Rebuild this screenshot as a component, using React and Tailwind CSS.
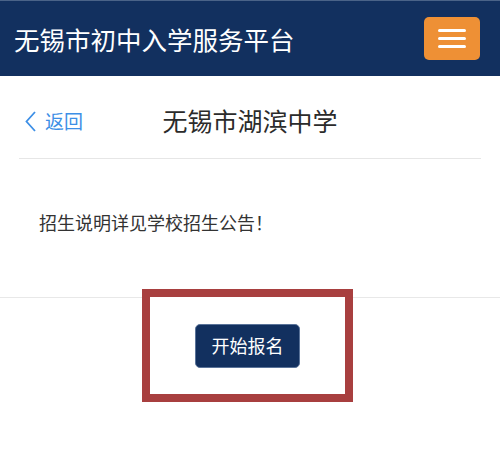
const FONT = { fontFamily: '"Noto Sans CJK SC", "Noto Sans", sans-serif' };

const App = () => {
  return (
    <div className="w-[500px] h-[463px] bg-white overflow-hidden" style={FONT}>
      {/* top bar */}
      <div className="h-[76px] bg-[#12305f] border-t border-[#4a6388] flex items-center justify-between pl-[14px] pr-[20px]">
        <h1 className="text-[25.5px] text-white leading-none">无锡市初中入学服务平台</h1>
        <button className="w-[56px] h-[43px] bg-[#ee9035] rounded-[5px] flex flex-col items-center justify-center gap-[5px]">
          <span className="block w-[28px] h-[3px] bg-white rounded-full" />
          <span className="block w-[28px] h-[3px] bg-white rounded-full" />
          <span className="block w-[28px] h-[3px] bg-white rounded-full" />
        </button>
      </div>

      {/* page title row */}
      <div className="mx-[19px] h-[83px] pt-[8px] border-b border-[#e6e6e6] grid grid-cols-[1fr_auto_1fr] items-center">
        <a className="flex items-center gap-[9px] pl-[6px] text-[#3d8fe6] text-[19px]">
          <svg width="11" height="21" viewBox="0 0 11 21" fill="none" stroke="currentColor" strokeWidth="1.8">
            <path d="M10 1 L1.5 10.5 L10 20" />
          </svg>
          <span>返回</span>
        </a>
        <h2 className="text-[25px] text-[#2b2b2b]">无锡市湖滨中学</h2>
        <div />
      </div>

      {/* notice */}
      <div className="h-[139px] border-b border-[#e8e8e8] pl-[39px] pt-[51px]">
        <p className="text-[18px] text-[#333] leading-[24px]">招生说明详见学校招生公告！</p>
      </div>

      {/* action, highlighted */}
      <div className="flex pl-[142px] -mt-[9px]">
        <div className="w-[211px] h-[113px] border-[8px] border-[#a83f3f] bg-white flex items-center justify-center">
          <button className="w-[105px] h-[44px] bg-[#12305f] border border-[#5a7399] rounded-[5px] text-white text-[18px]">
            开始报名
          </button>
        </div>
      </div>
    </div>
  );
};

export default App;
